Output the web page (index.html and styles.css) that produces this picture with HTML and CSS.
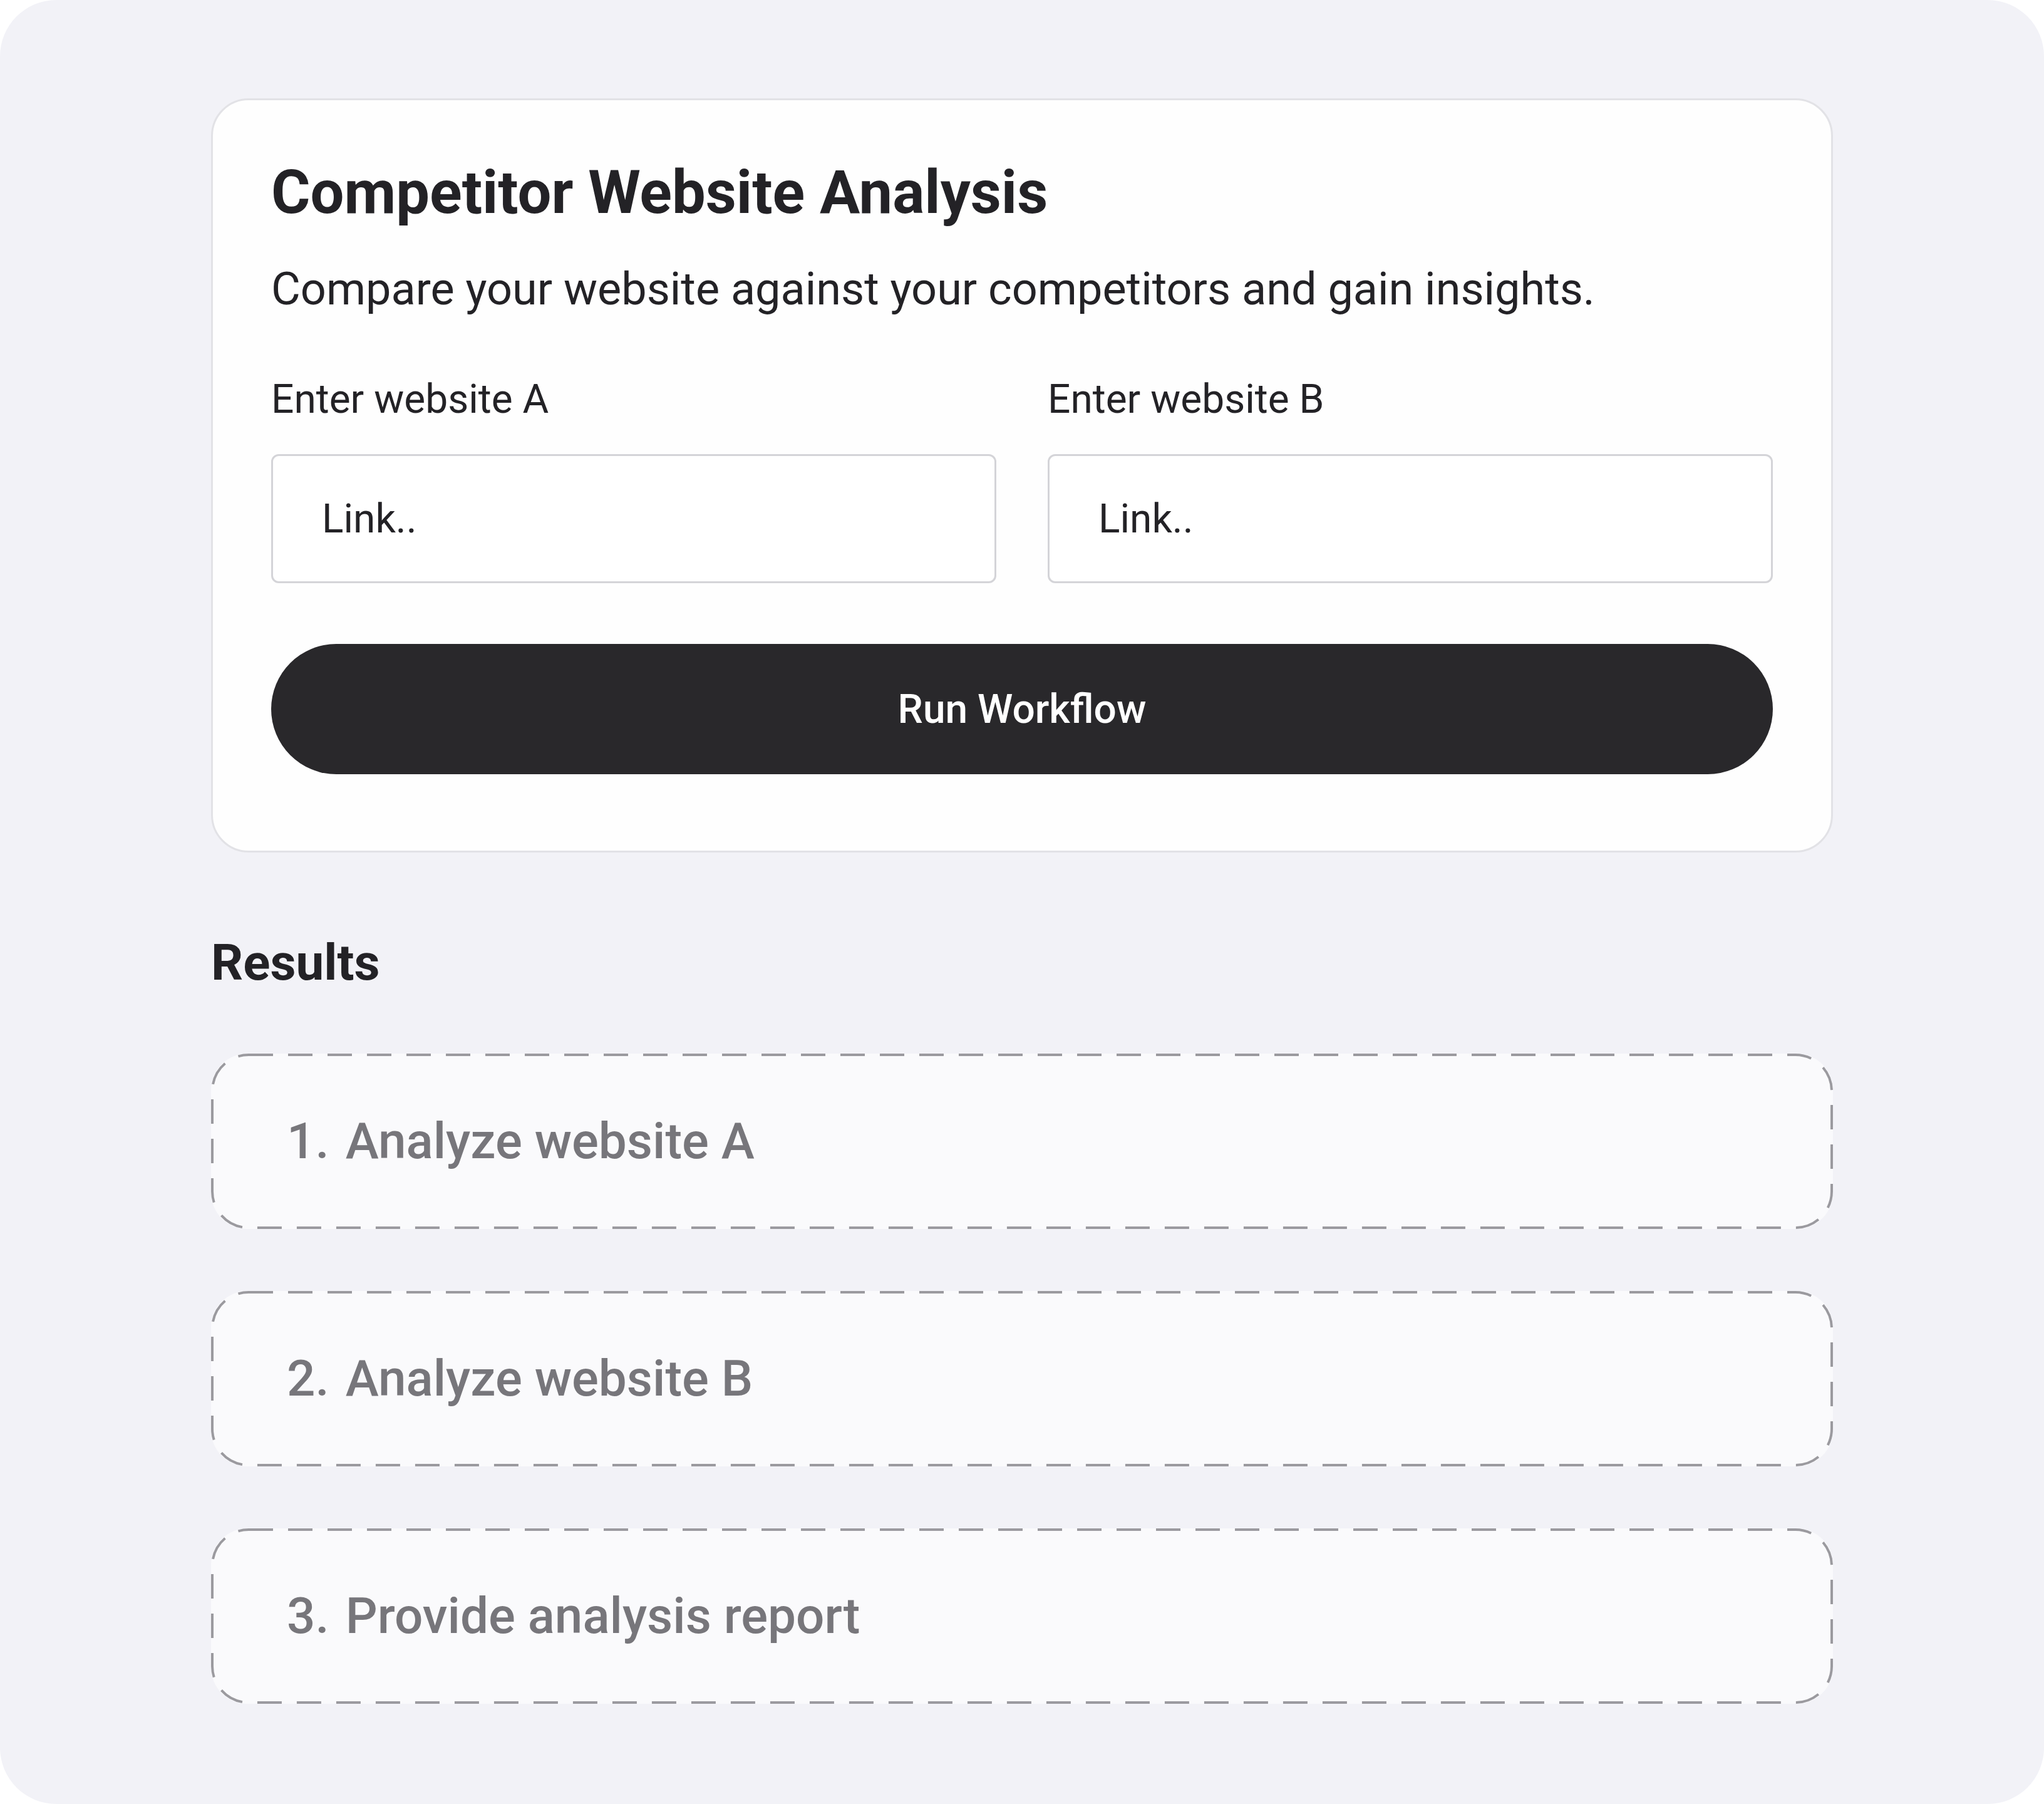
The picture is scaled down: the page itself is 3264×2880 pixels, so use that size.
FILE: index.html
```html
<!DOCTYPE html>
<html lang="en">
<head>
<meta charset="utf-8">
<title>Competitor Website Analysis</title>
<link rel="stylesheet" href="styles.css">
</head>
<body>
<div class="frame">
  <section class="card">
    <h1 class="title">Competitor Website Analysis</h1>
    <p class="subtitle">Compare your website against your competitors and gain insights.</p>
    <div class="fields">
      <div class="field">
        <label class="label">Enter website A</label>
        <div class="input">Link..</div>
      </div>
      <div class="field">
        <label class="label">Enter website B</label>
        <div class="input">Link..</div>
      </div>
    </div>
    <button class="run">Run Workflow</button>
  </section>

  <h2 class="results-title">Results</h2>
  <div class="results">
    <div class="step">
      <svg class="dash" width="2590" height="280"><rect x="2" y="2" width="2586" height="276" rx="58" ry="58"/></svg>
      <span class="num">1.</span><span>Analyze website A</span>
    </div>
    <div class="step">
      <svg class="dash" width="2590" height="280"><rect x="2" y="2" width="2586" height="276" rx="58" ry="58"/></svg>
      <span class="num">2.</span><span>Analyze website B</span>
    </div>
    <div class="step">
      <svg class="dash" width="2590" height="280"><rect x="2" y="2" width="2586" height="276" rx="58" ry="58"/></svg>
      <span class="num">3.</span><span>Provide analysis report</span>
    </div>
  </div>
</div>
</body>
</html>
```

FILE: styles.css
```css
html, body {
  margin: 0;
  padding: 0;
  background: #ffffff;
}

body {
  font-family: Roboto, "Noto Sans", "Liberation Sans", sans-serif;
  color: #232226;
}

.frame {
  box-sizing: border-box;
  width: 3264px;
  height: 2880px;
  background: #f2f2f7;
  border-radius: 90px;
  padding: 157px 337px 0 337px;
}

.card {
  background: #fefefe;
  border: 3px solid #e2e2e6;
  border-radius: 60px;
  padding: 91px 93px 122px 93px;
}

.title {
  margin: 0;
  font-size: 95.6px;
  line-height: 112px;
  font-weight: 700;
  color: #232226;
}

.subtitle {
  margin: 57px 0 0 0;
  font-size: 72px;
  line-height: 84px;
  font-weight: 400;
  color: #232226;
}

.fields {
  margin-top: 96px;
  display: grid;
  grid-template-columns: 1fr 1fr;
  column-gap: 82px;
}

.field {
  display: flex;
  flex-direction: column;
}

.label {
  font-size: 64px;
  line-height: 76px;
  font-weight: 400;
  color: #232226;
}

.input {
  margin-top: 49px;
  box-sizing: border-box;
  height: 206px;
  border: 3px solid #d4d4d8;
  border-radius: 12px;
  background: #ffffff;
  padding-left: 78px;
  display: flex;
  align-items: center;
  font-size: 64px;
  color: #232226;
}

.run {
  display: flex;
  align-items: center;
  justify-content: center;
  width: 100%;
  height: 208px;
  margin-top: 97px;
  border: none;
  border-radius: 104px;
  background: #29282b;
  color: #ffffff;
  font-family: Roboto, "Noto Sans", "Liberation Sans", sans-serif;
  font-size: 64px;
  font-weight: 500;
  padding: 0;
}

.results-title {
  margin: 129px 0 0 0;
  font-size: 80px;
  line-height: 94px;
  font-weight: 700;
  color: #232226;
}

.results {
  margin-top: 98px;
  display: flex;
  flex-direction: column;
  gap: 99px;
}

.step {
  position: relative;
  box-sizing: border-box;
  height: 280px;
  border-radius: 58px;
  background: #fafafc;
  display: flex;
  align-items: center;
  padding-left: 121px;
  font-size: 80px;
  font-weight: 500;
  color: #77767b;
}

.step .num {
  margin-right: 26px;
}

.dash {
  position: absolute;
  left: 0;
  top: 0;
  overflow: visible;
}

.dash rect {
  fill: none;
  stroke: #9b9a9f;
  stroke-width: 4;
  stroke-dasharray: 39 24;
}
```
